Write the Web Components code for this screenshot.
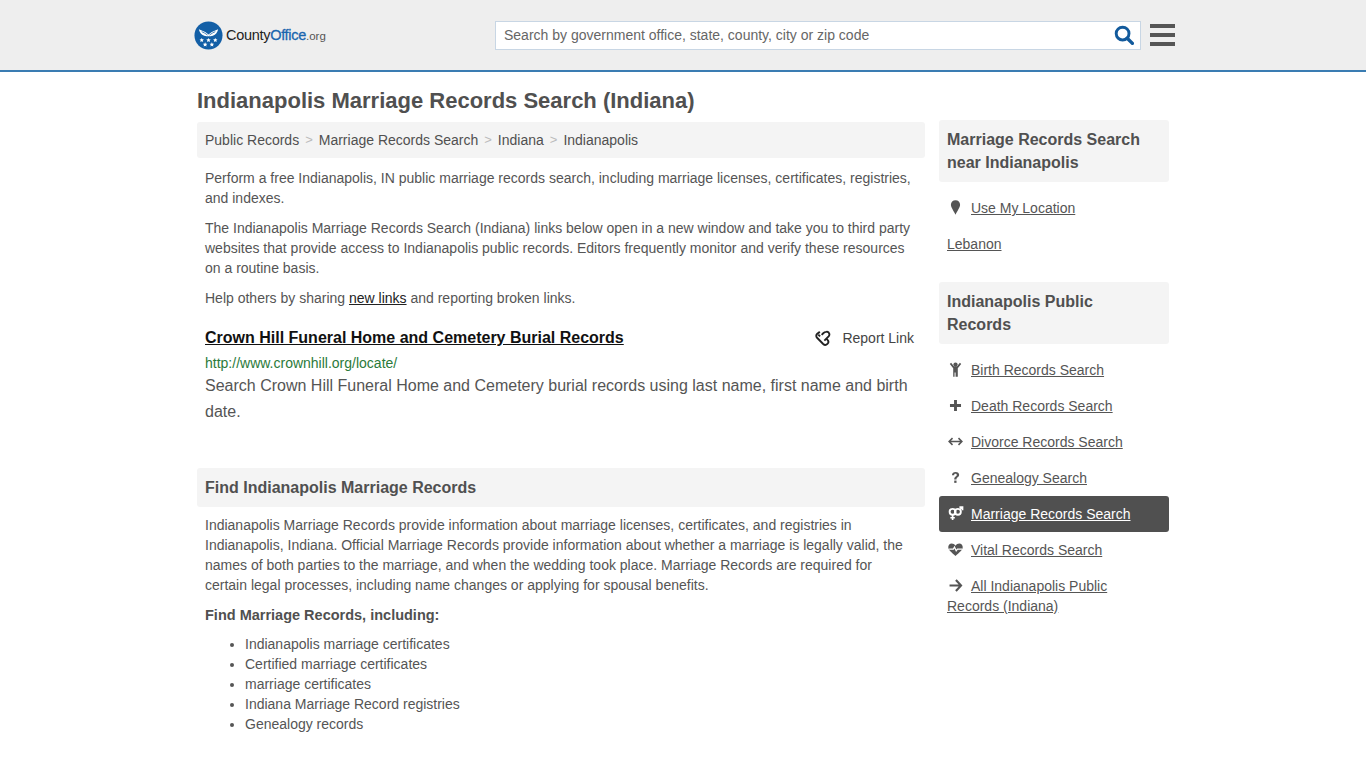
<!DOCTYPE html>
<html lang="en">
<head>
<meta charset="utf-8">
<title>Indianapolis Marriage Records Search (Indiana)</title>
<style>
  html, body { margin: 0; padding: 0; height: 768px; overflow: hidden; background: #fff; }
  body { font-family: "Liberation Sans", Arial, sans-serif; font-size: 14px; line-height: 20px; color: #555; }
</style>
</head>
<body>
<site-header></site-header>
<page-layout>
  <page-title slot="title">Indianapolis Marriage Records Search (Indiana)</page-title>
  <main-column slot="main"></main-column>
  <side-column slot="side"></side-column>
</page-layout>

<script>
  const ICONS = {
    search: '<circle cx="8.6" cy="8.6" r="6.4" fill="none" stroke="currentColor" stroke-width="2.9"/><path d="M13.2 13.2 L18.4 18.4" stroke="currentColor" stroke-width="3.4" stroke-linecap="round"/>',
    pin: '<path d="M10 1.5c-3.2 0-5.4 2.4-5.4 5.4 0 3 3.4 7.6 5.4 11.6 2-4 5.4-8.6 5.4-11.6 0-3-2.200-5.400-5.400-5.400z" fill="currentColor"/>',
    child: '<circle cx="10" cy="4.200" r="2.500" fill="currentColor"/><path d="M3.300 3.500l1.500-1.300 3.400 4h3.600l3.400-4 1.500 1.300-4 5v10h-2.600v-5h-1.200v5H7.300v-10z" fill="currentColor"/>',
    plus: '<path d="M8.300 3.500h3.400v4.800h4.800v3.400h-4.800v4.800H8.300v-4.800H3.500V8.300h4.800z" fill="currentColor"/>',
    arrows: '<path d="M6.500 6L2.500 10l4 4M13.500 6l4 4-4 4M3 10h14" fill="none" stroke="currentColor" stroke-width="1.800"/>',
    question: '<path d="M5.800 7.300c.2-2.500 1.900-3.800 4.300-3.800 2.500 0 4.200 1.400 4.200 3.400 0 2.900-3.200 2.900-3.200 5.400H8.500c0-3.500 3-3.500 3-5.200 0-.9-.6-1.400-1.500-1.400-1 0-1.500.6-1.600 1.600z" fill="currentColor"/><rect x="8.500" y="13.600" width="2.700" height="2.700" fill="currentColor"/>',
    venusmars: '<circle cx="6.600" cy="8" r="3.500" fill="none" stroke="currentColor" stroke-width="2.200"/><path d="M6.600 11.500v6M4 15h5.200" stroke="currentColor" stroke-width="2" fill="none"/><circle cx="12.800" cy="8" r="3.500" fill="none" stroke="currentColor" stroke-width="2.200"/><path d="M15 5.600l3-3M14.600 2.500h3.700v3.700" stroke="currentColor" stroke-width="1.900" fill="none"/>',
    heartbeat: '<path d="M10 17.500C6 14.200 1.500 11 1.500 7.200 1.500 4.800 3.300 3 5.500 3 7.300 3 9 4 10 5.500 11 4 12.700 3 14.500 3c2.200 0 4 1.800 4 4.200 0 3.800-4.500 7-8.500 10.300z" fill="currentColor"/><path d="M2.500 9.500h5l1.300-2.300 2 4.300 1.500-2h5.500" fill="none" stroke="#fff" stroke-width="1.400"/>',
    arrow: '<path d="M10.500 3.500l6 6.500-6 6.500M16 10H3" fill="none" stroke="currentColor" stroke-width="2.500"/>',
    unlink: '<path d="M6.500 3.200 3.600 5.200c-1.500 1.300-1.400 3.300-.2 4.500l6.800 7c1.400 1.300 3.400 1.300 4.700-.1 1.300-1.300 1.300-3.200.1-4.500l-1.800-1.900M13.500 16.800M6.800 8.200l-2-2M13.500 3.200c1.600-.4 3.100.6 3.500 2.100.3 1.100-.1 2.200-.8 3L11.500 13M8.500 6.500l1.800-1.800c.8-.8 2-1.400 3.200-1.500" fill="none" stroke="currentColor" stroke-width="2.100"/>'
  };

  const svgIcon = (name, size) =>
    `<svg width="${size}" height="${size}" viewBox="0 0 20 20" aria-hidden="true">${ICONS[name]}</svg>`;

  class SiteHeader extends HTMLElement {
    constructor() {
      super();
      this.attachShadow({ mode: 'open' });
    }

    connectedCallback() {
      this.shadowRoot.innerHTML = `
        <style>
          :host { display: block; height: 70px; background: #eee; border-bottom: 2px solid #3a7cb2; box-sizing: content-box; }
          .bar { width: 992px; height: 70px; margin: 0 auto; padding-left: 7px; box-sizing: border-box; display: flex; align-items: center; position: relative; top: 0; }
          .logo { display: flex; align-items: center; width: 301px; margin-right: 0; height: 30px; }
          .seal { width: 29px; height: 29px; flex: none; display: block; }
          .word { font-size: 14.500px; letter-spacing: -0.300px; color: #222; margin-left: 3px; }
          .word b { font-weight: 400; color: #1a66ae; -webkit-text-stroke: 0.300px #1a66ae; }
          .word small { font-size: 11.500px; color: #555; letter-spacing: 0; }
          .search { width: 646px; height: 29px; box-sizing: border-box; background: #fff; border: 1px solid #c8d6e4; display: flex; align-items: center; padding: 0 6px 0 8px; }
          .search span { flex: 1; font-size: 14px; color: #666; }
          .search svg { color: #125a9c; display: block; }
          .menu { width: 25px; margin-left: 9px; display: flex; flex-direction: column; gap: 5px; }
          .menu i { display: block; height: 4px; background: #555; }
        </style>
        <div class="bar">
          <div class="logo">
            <svg class="seal" viewBox="0 0 30 30" aria-hidden="true">
              <circle cx="15" cy="15" r="14.500" fill="#135fa6"/>
              <path d="M5 8.500c2.500 1 5 1.800 7 3.200L15 14l3-2.300c2-1.400 4.500-2.200 7-3.200-.6 3-2.500 5.700-5.500 6.800-1.600.6-3 .6-4.500.6s-2.900 0-4.500-.6C7.500 14.200 5.600 11.500 5 8.500z" fill="#fff"/>
              <path d="M8 11c2 .9 4 2 6 3.500M22 11c-2 .9-4 2-6 3.500" stroke="#135fa6" stroke-width=".8" fill="none"/>
              <path d="M8 17.500l.7 1.500 1.600.1-1.200 1.100.4 1.600-1.500-.8-1.500.8.400-1.600-1.200-1.100 1.600-.1zM15 17.500l.7 1.500 1.600.1-1.200 1.100.4 1.600-1.500-.8-1.500.8.400-1.600-1.200-1.100 1.600-.1zM22 17.500l.7 1.500 1.600.1-1.200 1.100.4 1.600-1.500-.8-1.500.8.400-1.600-1.200-1.100 1.600-.1zM11.500 22l.7 1.500 1.600.1-1.200 1.100.4 1.600-1.500-.8-1.500.8.400-1.600-1.200-1.100 1.600-.1zM18.500 22l.7 1.500 1.600.1-1.200 1.100.4 1.600-1.500-.8-1.500.8.400-1.600-1.200-1.100 1.600-.1z" fill="#fff"/>
            </svg>
            <span class="word">County<b>Office</b><small>.org</small></span>
          </div>
          <div class="search">
            <span>Search by government office, state, county, city or zip code</span>
            ${svgIcon('search', 20)}
          </div>
          <div class="menu"><i></i><i></i><i></i></div>
        </div>
      `;
    }
  }

  class PageLayout extends HTMLElement {
    constructor() {
      super();
      this.attachShadow({ mode: 'open' });
      this.shadowRoot.innerHTML = `
        <style>
          :host { display: block; width: 972px; margin: 0 auto; }
          .cols { display: grid; grid-template-columns: 728px 230px; column-gap: 14px; align-items: start; }
        </style>
        <slot name="title"></slot>
        <div class="cols">
          <slot name="main"></slot>
          <slot name="side"></slot>
        </div>
      `;
    }
  }

  class PageTitle extends HTMLElement {
    constructor() {
      super();
      this.attachShadow({ mode: 'open' });
      this.shadowRoot.innerHTML = `
        <style>
          :host { display: block; font-size: 22px; font-weight: 700; line-height: 26px; color: #505050; padding: 16px 0 8px; height: 26px; }
        </style>
        <slot></slot>
      `;
    }
  }

  class GrayBar extends HTMLElement {
    constructor() {
      super();
      this.attachShadow({ mode: 'open' });
      this.shadowRoot.innerHTML = `
        <style>
          :host { display: block; background: #f4f4f4; border-radius: 3px; padding: 8px; color: #505050; }
        </style>
        <slot></slot>
      `;
    }
  }

  class MainColumn extends HTMLElement {
    constructor() {
      super();
      this.attachShadow({ mode: 'open' });
    }

    connectedCallback() {
      const crumbs = ['Public Records', 'Marriage Records Search', 'Indiana', 'Indianapolis'];
      const finds = ['Indianapolis marriage certificates', 'Certified marriage certificates', 'marriage certificates', 'Indiana Marriage Record registries', 'Genealogy records'];
      this.shadowRoot.innerHTML = `
        <style>
          :host { display: block; }
          .crumbs { display: flex; margin-bottom: 10px; }
          .crumbs .sep { color: #bbb; margin: 0 6px; font-size: 13px; }
          .text { padding: 0 8px; }
          p { margin: 0 0 10px; }
          a { color: inherit; }
          .share a { color: #222; }
          .res { padding: 10px 8px 0; }
          .res-head { display: flex; justify-content: space-between; align-items: center; height: 20px; }
          .res-title { font-size: 16px; font-weight: 700; color: #111; text-decoration: underline; }
          .report { display: flex; align-items: center; gap: 10px; color: #444; padding-right: 3px; }
          .report svg { display: block; color: #222; }
          .url { color: #2b7a3a; margin-top: 5px; }
          .desc { font-size: 16px; line-height: 26px; margin: 0; }
          .find { font-size: 16px; font-weight: 700; margin: 43px 0 8px; line-height: 23px; }
          h3 { font-size: 14.500px; line-height: 20px; margin: 0 0 9px; font-weight: 700; color: #505050; }
          ul { margin: 0; padding-left: 40px; }
        </style>
        <gray-bar class="crumbs">
          ${crumbs.map((c, i) => (i ? '<span class="sep">&gt;</span>' : '') + `<span>${c}</span>`).join('')}
        </gray-bar>
        <div class="text">
          <p>Perform a free Indianapolis, IN public marriage records search, including marriage licenses, certificates, registries, and indexes.</p>
          <p>The Indianapolis Marriage Records Search (Indiana) links below open in a new window and take you to third party websites that provide access to Indianapolis public records. Editors frequently monitor and verify these resources on a routine basis.</p>
          <p class="share">Help others by sharing <a href="#">new links</a> and reporting broken links.</p>
        </div>
        <div class="res">
          <div class="res-head">
            <a class="res-title" href="#">Crown Hill Funeral Home and Cemetery Burial Records</a>
            <span class="report">${svgIcon('unlink', 18)}Report Link</span>
          </div>
          <div class="url">http://www.crownhill.org/locate/</div>
          <p class="desc">Search Crown Hill Funeral Home and Cemetery burial records using last name, first name and birth date.</p>
        </div>
        <gray-bar class="find">Find Indianapolis Marriage Records</gray-bar>
        <div class="text">
          <p>Indianapolis Marriage Records provide information about marriage licenses, certificates, and registries in Indianapolis, Indiana. Official Marriage Records provide information about whether a marriage is legally valid, the names of both parties to the marriage, and when the wedding took place. Marriage Records are required for certain legal processes, including name changes or applying for spousal benefits.</p>
          <h3>Find Marriage Records, including:</h3>
          <ul>${finds.map(f => `<li>${f}</li>`).join('')}</ul>
        </div>
      `;
    }
  }

  class SideLink extends HTMLElement {
    constructor() {
      super();
      this.attachShadow({ mode: 'open' });
    }

    connectedCallback() {
      const icon = this.getAttribute('icon');
      this.shadowRoot.innerHTML = `
        <style>
          :host { display: block; padding: 8px; border-radius: 3px; color: #555; }
          :host([active]) { background: #505050; color: #fff; }
          a { color: inherit; }
          svg { vertical-align: -3px; margin-right: 7px; margin-left: 0; }
        </style>
        ${icon ? svgIcon(icon, 17) : ''}<a href="#"><slot></slot></a>
      `;
    }
  }

  class SideColumn extends HTMLElement {
    constructor() {
      super();
      this.attachShadow({ mode: 'open' });
    }

    connectedCallback() {
      this.shadowRoot.innerHTML = `
        <style>
          :host { display: block; margin-top: -2px; }
          .head { font-size: 16px; font-weight: 700; line-height: 23px; margin-bottom: 8px; }
          .group { margin-bottom: 20px; }
          .first { margin-top: 18px; }
        </style>
        <gray-bar class="head">Marriage Records Search near Indianapolis</gray-bar>
        <div class="group first" style="margin-top:0">
          <side-link icon="pin">Use My Location</side-link>
          <side-link>Lebanon</side-link>
        </div>
        <gray-bar class="head">Indianapolis Public Records</gray-bar>
        <div class="group">
          <side-link icon="child">Birth Records Search</side-link>
          <side-link icon="plus">Death Records Search</side-link>
          <side-link icon="arrows">Divorce Records Search</side-link>
          <side-link icon="question">Genealogy Search</side-link>
          <side-link icon="venusmars" active>Marriage Records Search</side-link>
          <side-link icon="heartbeat">Vital Records Search</side-link>
          <side-link icon="arrow">All Indianapolis Public Records (Indiana)</side-link>
        </div>
      `;
    }
  }

  customElements.define('site-header', SiteHeader);
  customElements.define('page-layout', PageLayout);
  customElements.define('page-title', PageTitle);
  customElements.define('gray-bar', GrayBar);
  customElements.define('main-column', MainColumn);
  customElements.define('side-link', SideLink);
  customElements.define('side-column', SideColumn);
</script>
</body>
</html>
